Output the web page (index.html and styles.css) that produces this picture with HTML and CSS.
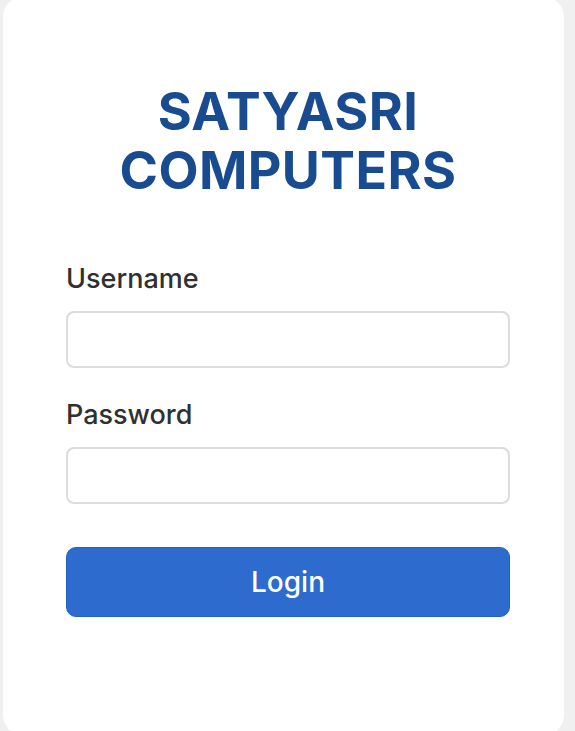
FILE: index.html
```html
<!DOCTYPE html>
<html lang="en">
<head>
<meta charset="utf-8">
<title>Satyasri Computers - Login</title>
<link rel="stylesheet" href="styles.css">
</head>
<body>
<main class="card">
  <h1 class="brand">SATYASRI<br>COMPUTERS</h1>
  <form class="login-form">
    <label class="field-label" for="username">Username</label>
    <input class="field-input" id="username" type="text">
    <label class="field-label" for="password">Password</label>
    <input class="field-input" id="password" type="password">
    <button class="login-btn" type="button">Login</button>
  </form>
</main>
</body>
</html>
```
FILE: styles.css
```css
html, body {
  margin: 0;
  padding: 0;
}
body {
  background: #f0f0f0;
  font-family: "Inter", "Liberation Sans", sans-serif;
  height: 731px;
  overflow: hidden;
}
.card {
  box-sizing: border-box;
  width: 561px;
  height: 738px;
  margin: -3px 0 0 3px;
  background: #ffffff;
  border-radius: 20px;
  padding: 85px 54px 0 63px;
}
.brand {
  margin: 0;
  text-align: center;
  color: #184b90;
  font-size: 52px;
  line-height: 59px;
  font-weight: 700;
  letter-spacing: 0.4px;
}
.login-form {
  display: flex;
  flex-direction: column;
  margin-top: 63px;
}
.field-label {
  color: #303030;
  font-size: 27px;
  font-weight: 500;
  line-height: 32px;
  margin-bottom: 16px;
}
.field-input {
  box-sizing: border-box;
  height: 57px;
  border: 2px solid #dcdcdc;
  border-radius: 8px;
  background: #fff;
  margin: 0 0 31px 0;
  font-size: 20px;
  padding: 0 12px;
}
.login-btn {
  height: 70px;
  margin-top: 12px;
  border: 1px solid #2561c2;
  border-radius: 10px;
  background: #2d6bce;
  color: #ffffff;
  font-family: "Inter", "Liberation Sans", sans-serif;
  font-size: 28px;
  font-weight: 500;
}
```
